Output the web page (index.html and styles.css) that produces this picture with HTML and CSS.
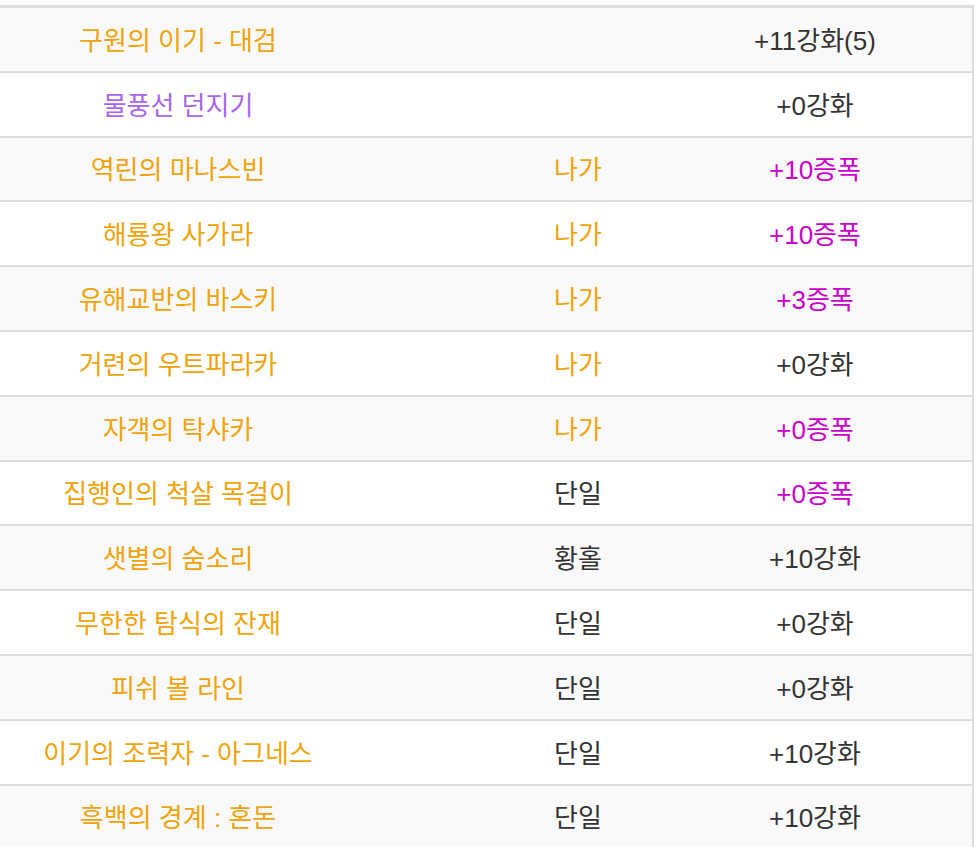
FILE: index.html
```html
<!DOCTYPE html>
<html lang="ko">
<head>
<meta charset="utf-8">
<link rel="stylesheet" href="styles.css">
</head>
<body>
<table class="gear">
  <colgroup>
    <col class="c-name">
    <col class="c-set">
    <col class="c-lv">
  </colgroup>
  <tbody>
    <tr><td class="leg">구원의 이기 - 대검</td><td></td><td>+11강화(5)</td></tr>
    <tr><td class="epic">물풍선 던지기</td><td></td><td>+0강화</td></tr>
    <tr><td class="leg">역린의 마나스빈</td><td class="leg">나가</td><td class="amp">+10증폭</td></tr>
    <tr><td class="leg">해룡왕 사가라</td><td class="leg">나가</td><td class="amp">+10증폭</td></tr>
    <tr><td class="leg">유해교반의 바스키</td><td class="leg">나가</td><td class="amp">+3증폭</td></tr>
    <tr><td class="leg">거련의 우트파라카</td><td class="leg">나가</td><td>+0강화</td></tr>
    <tr><td class="leg">자객의 탁샤카</td><td class="leg">나가</td><td class="amp">+0증폭</td></tr>
    <tr><td class="leg">집행인의 척살 목걸이</td><td>단일</td><td class="amp">+0증폭</td></tr>
    <tr><td class="leg">샛별의 숨소리</td><td>황홀</td><td>+10강화</td></tr>
    <tr><td class="leg">무한한 탐식의 잔재</td><td>단일</td><td>+0강화</td></tr>
    <tr><td class="leg">피쉬 볼 라인</td><td>단일</td><td>+0강화</td></tr>
    <tr><td class="leg">이기의 조력자 - 아그네스</td><td>단일</td><td>+10강화</td></tr>
    <tr><td class="leg">흑백의 경계 : 혼돈</td><td>단일</td><td>+10강화</td></tr>
  </tbody>
</table>
</body>
</html>
```

FILE: styles.css
```css
html, body {
  margin: 0;
  padding: 0;
  background: #fff;
  overflow: hidden;
}
body {
  padding-top: 5px;
  font-family: "Liberation Sans", "Noto Sans CJK KR", sans-serif;
  font-size: 26px;
  color: #333;
}
.gear {
  border-collapse: separate;
  border-spacing: 0;
  table-layout: fixed;
  width: 1116px;
  margin-left: -142px;
  border-top: 3px solid #ddd;
  border-right: 2px solid #ddd;
}
.c-name { width: 640px; }
.c-set { width: 160px; }
.c-lv { width: 314px; }
.gear td {
  box-sizing: border-box;
  height: 64.8px;
  padding: 3px 0 0;
  line-height: 1;
  text-align: center;
  vertical-align: middle;
  border-bottom: 2px solid #ddd;
  white-space: nowrap;
}
.gear tr:nth-child(odd) td { background: #f9f9f9; }
.gear tr:nth-child(even) td { background: #fff; }
.leg { color: #f0a30a; }
.epic { color: #a865ef; }
.amp { color: #cc00cc; }
```
